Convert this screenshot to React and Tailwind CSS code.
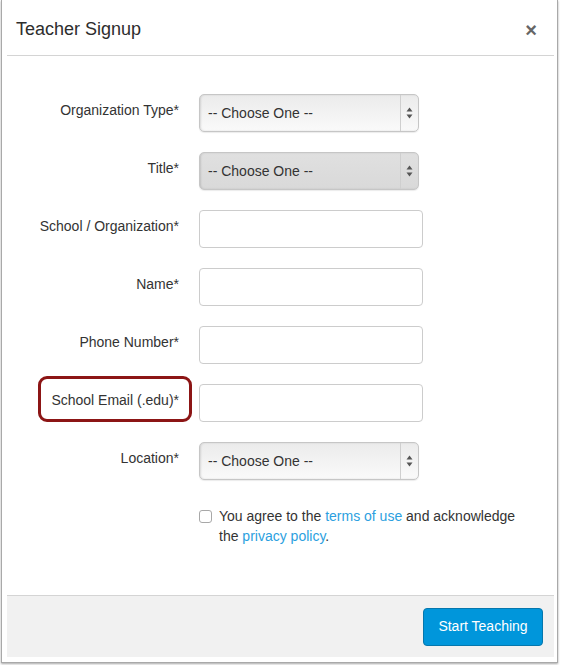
import React from "react";

function Arrows() {
  return (
    <svg width="7" height="12" viewBox="0 0 7 12" className="block">
      <path d="M3.5 0.5 L6.5 4.5 L0.5 4.5 Z" fill="#555" />
      <path d="M3.5 11.5 L6.5 7.5 L0.5 7.5 Z" fill="#555" />
    </svg>
  );
}

function Select({ dark }) {
  return (
    <div
      className={
        "w-[220px] h-[38px] rounded-[5px] border border-[#c6c6c6] flex items-stretch shadow-[inset_1px_0_2px_rgba(0,0,0,0.12),0_1px_1px_rgba(0,0,0,0.08)] " +
        (dark
          ? "bg-gradient-to-b from-[#e0e0e0] to-[#d9d9d9]"
          : "bg-gradient-to-b from-[#ebebeb] to-[#fafafa]")
      }
    >
      <div className="flex-1 flex items-center pl-[8px] text-[14px] text-[#333]">-- Choose One --</div>
      <div className="w-[18px] border-l border-[#cfcfcf] flex items-center justify-center">
        <Arrows />
      </div>
    </div>
  );
}

function Input() {
  return <div className="w-[224px] h-[38px] rounded-[4px] border border-[#cccccc] bg-white" />;
}

function Row({ label, children, highlight }) {
  return (
    <div className="flex items-center h-[38px]">
      <div className="w-[172px] flex justify-end text-[14px] text-[#333] mb-[6px]">
        <div className="relative">
          {highlight && (
            <div className="absolute left-[-13px] right-[-13px] top-[-14px] bottom-[-11px] border-[3px] border-[#8c1515] rounded-[9px]" />
          )}
          <span className="relative">{label}</span>
        </div>
      </div>
      <div className="ml-[20px]">{children}</div>
    </div>
  );
}

export default function App() {
  return (
    <div className="w-[561px] h-[665px] bg-white" style={{ fontFamily: '"Liberation Sans", Arial, sans-serif' }}>
      <div className="ml-[1px] w-[557px] h-[663px] border-l border-r border-b border-[#a9a9a9] shadow-[0_1px_2px_rgba(0,0,0,0.35)] bg-white pl-[5px] pr-[3px] pb-[5px] flex flex-col">
        <div className="h-[56px] border-b border-[#d4d4d4] flex items-center justify-between pl-[9px] pr-[17px] pt-[4px]">
          <div className="text-[18px] text-[#2d2d2d]">Teacher Signup</div>
          <div className="text-[20px] font-bold text-[#666] leading-none">×</div>
        </div>
        <div className="flex-1 pt-[38px] flex flex-col gap-[20px]">
          <Row label="Organization Type*"><Select /></Row>
          <Row label="Title*"><Select dark /></Row>
          <Row label="School / Organization*"><Input /></Row>
          <Row label="Name*"><Input /></Row>
          <Row label="Phone Number*"><Input /></Row>
          <Row label="School Email (.edu)*" highlight><Input /></Row>
          <Row label="Location*"><Select /></Row>
          <div className="flex pl-[192px] mt-[6px] text-[14px] leading-[20px] text-[#333]">
            <div className="w-[13px] h-[13px] mt-[4px] rounded-[3px] border border-[#a8a8a8] bg-white shrink-0" />
            <div className="ml-[7px] w-[310px]">
              You agree to the <span className="text-[#2c9fe0]">terms of use</span> and acknowledge the{" "}
              <span className="text-[#2c9fe0]">privacy policy</span>.
            </div>
          </div>
        </div>
        <div className="h-[62px] border-t border-[#d4d4d4] bg-[#f1f1f1] flex items-center justify-end pr-[11px]">
          <div className="w-[120px] h-[38px] rounded-[4px] bg-[#0096db] border border-[#0577ad] text-white text-[14px] flex items-center justify-center">
            Start Teaching
          </div>
        </div>
      </div>
    </div>
  );
}
